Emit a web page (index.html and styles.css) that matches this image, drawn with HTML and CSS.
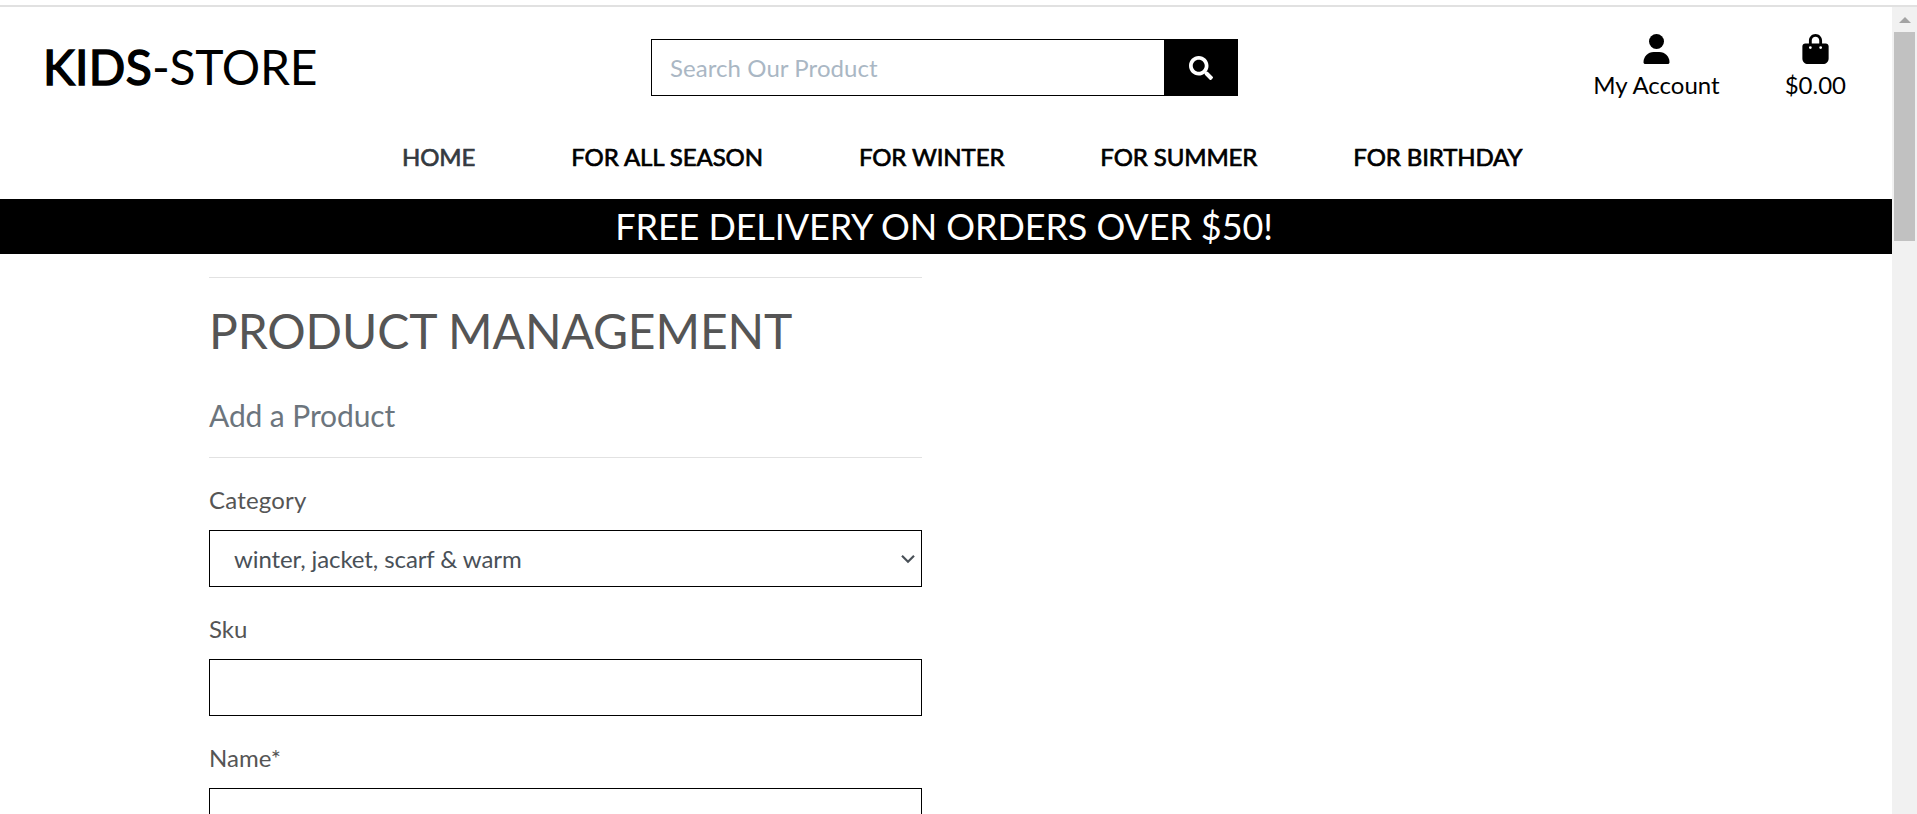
FILE: index.html
```
<!DOCTYPE html>
<html lang="en">
<head>
<meta charset="utf-8">
<title>Kids-Store</title>
<link rel="stylesheet" href="styles.css">
</head>
<body>
<div class="topline"></div>
<div class="viewport">
  <div class="page">
    <header class="header">
      <a class="logo"><span class="heavy">KIDS</span>-STORE</a>
      <form class="search">
        <input class="search-input" type="text" placeholder="Search Our Product">
        <button class="search-btn" type="button" aria-label="Search">
          <svg width="24" height="24" viewBox="0 0 512 512"><path fill="#fff" d="M505 442.700 405.300 343c-4.500-4.500-10.600-7-17-7H372c27.600-35.300 44-79.700 44-128C416 93.100 322.900 0 208 0S0 93.100 0 208s93.100 208 208 208c48.300 0 92.700-16.400 128-44v16.300c0 6.400 2.500 12.500 7 17l99.700 99.700c9.400 9.400 24.600 9.400 33.900 0l28.300-28.300c9.400-9.400 9.400-24.600.1-34zM208 336c-70.700 0-128-57.200-128-128 0-70.700 57.200-128 128-128 70.700 0 128 57.200 128 128 0 70.700-57.200 128-128 128z"/></svg>
        </button>
      </form>
      <div class="links">
        <a class="link">
          <svg width="27" height="30" viewBox="0 0 27 30"><circle cx="13.500" cy="7.500" r="7.500"/><path d="M10.700 18h5.600C22 18 26.500 22.500 26.500 28.200c0 1-.8 1.800-1.800 1.800H2.300c-1 0-1.800-.8-1.800-1.800C.5 22.500 5 18 10.700 18z"/></svg>
          <span>My Account</span>
        </a>
        <a class="link">
          <svg width="27" height="30" viewBox="0 0 448 512"><path d="M112 112C112 50 162 0 224 0s112 50 112 112v48h64c26.500 0 48 21.500 48 48v208c0 53-43 96-96 96H96c-53 0-96-43-96-96V208c0-26.500 21.500-48 48-48h64v-48zm48 48h128v-48c0-35.300-28.700-64-64-64s-64 28.700-64 64v48zm-24 96a24 24 0 1 0 0-48 24 24 0 1 0 0 48zm200-24a24 24 0 1 0-48 0 24 24 0 1 0 48 0z"/></svg>
          <span>$0.00</span>
        </a>
      </div>
    </header>
    <nav class="nav">
      <a class="nav-item current">HOME</a>
      <a class="nav-item">FOR ALL SEASON</a>
      <a class="nav-item">FOR WINTER</a>
      <a class="nav-item">FOR SUMMER</a>
      <a class="nav-item">FOR BIRTHDAY</a>
    </nav>
    <div class="banner">FREE DELIVERY ON ORDERS OVER $50!</div>
    <main class="content">
      <hr class="rule">
      <h2 class="title">PRODUCT MANAGEMENT</h2>
      <h5 class="subtitle">Add a Product</h5>
      <hr class="rule">
      <form class="form">
        <label class="label wide">Category</label>
        <div class="field select"><span>winter, jacket, scarf &amp; warm</span>
          <svg width="16" height="10" viewBox="0 0 16 10"><path d="M2 1.700 8 7.700 14 1.700" fill="none" stroke="#495057" stroke-width="2.200"/></svg>
        </div>
        <label class="label">Sku</label>
        <input class="field" type="text">
        <label class="label">Name*</label>
        <input class="field" type="text">
      </form>
    </main>
  </div>
  <div class="scrollbar">
    <svg class="arrow" width="12" height="6" viewBox="0 0 12 6"><path d="M6 0 12 6H0z" fill="#a3a3a3"/></svg>
    <div class="thumb"></div>
  </div>
</div>
</body>
</html>
```
FILE: styles.css
```
* { box-sizing: border-box; }
body {
  margin: 0;
  height: 814px;
  overflow: hidden;
  background: #fff;
  color: #000;
  font: 24px/36px Lato, sans-serif;
}
.topline { height: 2px; margin-top: 5px; background: #e1e1e1; }
.viewport { display: flex; height: 807px; }
.page { flex: 1; overflow: hidden; }
.header { display: flex; height: 120px; }
.logo {
  width: 606px;
  padding: 31px 0 0 43px;
  font-size: 48px;
  line-height: 58px;
  letter-spacing: -0.3px;
}
.heavy { letter-spacing: 0.3px; -webkit-text-stroke: 1.5px #000; }
.search { display: flex; width: 587px; height: 57px; margin: 32px 0 0 45px; }
.search-input {
  flex: 1;
  min-width: 0;
  padding: 0 18px;
  border: 1px solid #000;
  border-right: 0;
  border-radius: 0;
  outline: 0;
  font: 24px Lato, sans-serif;
  letter-spacing: 0.07px;
}
.search-input::placeholder { color: #aab7c4; opacity: 1; }
.search-btn {
  display: flex;
  align-items: center;
  justify-content: center;
  width: 74px;
  padding: 0;
  border: 0;
  background: #000;
}
.links { display: flex; gap: 65px; margin: 27px 46px 0 auto; }
.link { display: flex; flex-direction: column; align-items: center; }
.link svg { display: block; }
.link span { margin-top: 3px; }
.nav {
  display: flex;
  gap: 96px;
  height: 72px;
  padding: 12px 0 0 402px;
}
.nav-item {
  white-space: nowrap;
  letter-spacing: -0.1px;
  -webkit-text-stroke: 0.7px currentColor;
}
.current { color: #343a40; }
.banner {
  height: 55px;
  padding-right: 4px;
  background: #000;
  color: #fff;
  font-size: 36px;
  line-height: 55px;
  letter-spacing: -0.11px;
  text-align: center;
}
.content { width: 713px; margin-left: 209px; color: #555; }
.rule { height: 1px; margin: 23px 0 0; border: 0; background: #e2e2e2; }
.title { margin: 24px 0 0; font-size: 48px; font-weight: 400; line-height: 58px; letter-spacing: -0.12px; }
.subtitle { margin: 37px 0 24px; color: #6c757d; font-size: 30px; font-weight: 400; line-height: 36px; letter-spacing: -0.1px; }
.form { display: flex; flex-direction: column; padding-top: 24px; }
.label { margin-bottom: 12px; }
.wide { letter-spacing: 0.2px; }
.field {
  flex: none;
  width: 713px;
  height: 57px;
  margin-bottom: 24px;
  border: 1px solid #000;
  border-radius: 0;
  background: #fff;
  color: #495057;
}
.select { display: flex; align-items: center; justify-content: space-between; padding: 0 5px 0 24px; letter-spacing: -0.1px; }
.scrollbar { display: flex; flex-direction: column; align-items: center; width: 25px; background: #f1f1f1; }
.arrow { margin-top: 10px; }
.thumb { width: 21px; height: 209px; margin-top: 9px; background: #c1c1c1; }
```
